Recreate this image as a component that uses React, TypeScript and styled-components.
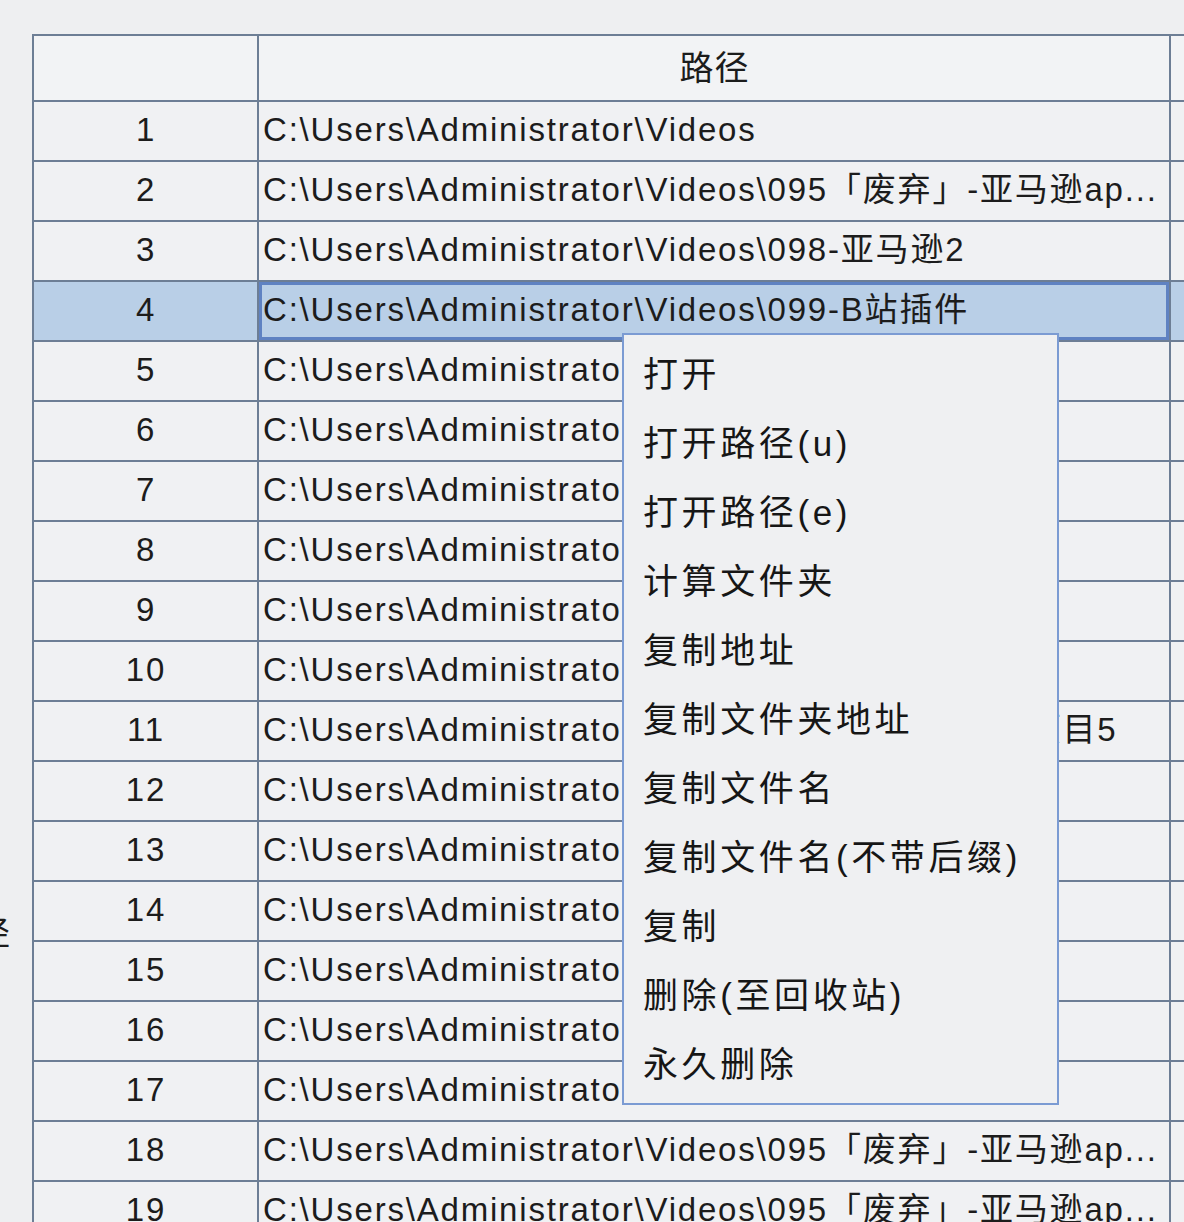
import styled, { createGlobalStyle } from "styled-components";

const GlobalStyle = createGlobalStyle`
  html, body {
    margin: 0;
    padding: 0;
    background: #eeeff1;
    overflow: hidden;
  }
  body {
    font-family: "Liberation Sans", Arial, "Noto Sans CJK SC", sans-serif;
    color: #1c1c1c;
  }
`;

const LINE = "#6d7e95";

const Page = styled.div`
  position: relative;
  width: 1184px;
  height: 1222px;
  overflow: hidden;
  display: flex;
  padding-top: 34px;
  box-sizing: border-box;
`;

const SideLabel = styled.div`
  width: 32px;
  flex: none;
  overflow: hidden;
  display: flex;
  justify-content: flex-end;
  align-items: flex-start;
  padding: 880px 22px 0 0;
  box-sizing: border-box;
  font-size: 33px;
  line-height: 40px;
  white-space: nowrap;
`;

const Table = styled.div`
  width: 1180px;
  flex: none;
  border-top: 2px solid ${LINE};
  border-left: 2px solid ${LINE};
  background: #f0f1f3;
`;

const Row = styled.div<{ $header?: boolean }>`
  display: grid;
  grid-template-columns: 225px 912px 1fr;
  height: ${(p) => (p.$header ? 66 : 60)}px;
  background: ${(p) => (p.$header ? "#f2f3f5" : "transparent")};
`;

const Cell = styled.div<{ $selected?: boolean; $center?: boolean; $focus?: boolean }>`
  border-right: 2px solid ${LINE};
  border-bottom: 2px solid ${LINE};
  display: flex;
  align-items: center;
  justify-content: ${(p) => (p.$center ? "center" : "flex-start")};
  padding-left: ${(p) => (p.$center ? 1 : 4)}px;
  padding-bottom: 2px;
  box-sizing: border-box;
  overflow: hidden;
  white-space: nowrap;
  font-size: 33px;
  line-height: 40px;
  letter-spacing: 1.8px;
  background: ${(p) => (p.$selected ? "#b9cfe7" : "transparent")};
  box-shadow: ${(p) => (p.$focus ? "inset 0 0 0 3px #5f82c2" : "none")};
`;

const HeaderCell = styled(Cell)`
  font-size: 34px;
  letter-spacing: 1px;
  padding-bottom: 0;
  background: transparent;
`;

const Menu = styled.div`
  position: absolute;
  left: 622px;
  top: 333px;
  width: 437px;
  box-sizing: border-box;
  border: 2px solid #7b9bd3;
  background: #eff0f2;
  padding: 5px 0 4px;
  display: flex;
  flex-direction: column;
`;

const MenuItem = styled.div`
  height: 69px;
  line-height: 69px;
  padding-left: 19px;
  font-size: 35px;
  letter-spacing: 3.6px;
  white-space: nowrap;
  color: #161616;
`;

const long = "C:\\Users\\Administrator\\Videos\\095「废弃」-亚马逊ap...";

const rows: string[] = [
  "C:\\Users\\Administrator\\Videos",
  long,
  "C:\\Users\\Administrator\\Videos\\098-亚马逊2",
  "C:\\Users\\Administrator\\Videos\\099-B站插件",
  "C:\\Users\\Administrator\\Videos\\100",
  "C:\\Users\\Administrator\\Videos\\101",
  "C:\\Users\\Administrator\\Videos\\102",
  "C:\\Users\\Administrator\\Videos\\103",
  "C:\\Users\\Administrator\\Videos\\104",
  "C:\\Users\\Administrator\\Videos\\105",
  "C:\\Users\\Administrator\\Videos\\096-亚马逊-批量项目5",
  "C:\\Users\\Administrator\\Videos\\106",
  "C:\\Users\\Administrator\\Videos\\107",
  "C:\\Users\\Administrator\\Videos\\108",
  "C:\\Users\\Administrator\\Videos\\109",
  "C:\\Users\\Administrator\\Videos\\110",
  "C:\\Users\\Administrator\\Videos\\111",
  long,
  long,
];

const menuItems = [
  "打开",
  "打开路径(u)",
  "打开路径(e)",
  "计算文件夹",
  "复制地址",
  "复制文件夹地址",
  "复制文件名",
  "复制文件名(不带后缀)",
  "复制",
  "删除(至回收站)",
  "永久删除",
];

const SELECTED = 3;

export default function App() {
  return (
    <>
      <GlobalStyle />
      <Page>
        <SideLabel>路径</SideLabel>
        <Table>
          <Row $header>
            <HeaderCell />
            <HeaderCell $center>路径</HeaderCell>
            <HeaderCell />
          </Row>
          {rows.map((path, i) => (
            <Row key={i}>
              <Cell $center $selected={i === SELECTED}>
                {i + 1}
              </Cell>
              <Cell $selected={i === SELECTED} $focus={i === SELECTED}>
                {path}
              </Cell>
              <Cell $selected={i === SELECTED} />
            </Row>
          ))}
        </Table>
        <Menu>
          {menuItems.map((label) => (
            <MenuItem key={label}>{label}</MenuItem>
          ))}
        </Menu>
      </Page>
    </>
  );
}
